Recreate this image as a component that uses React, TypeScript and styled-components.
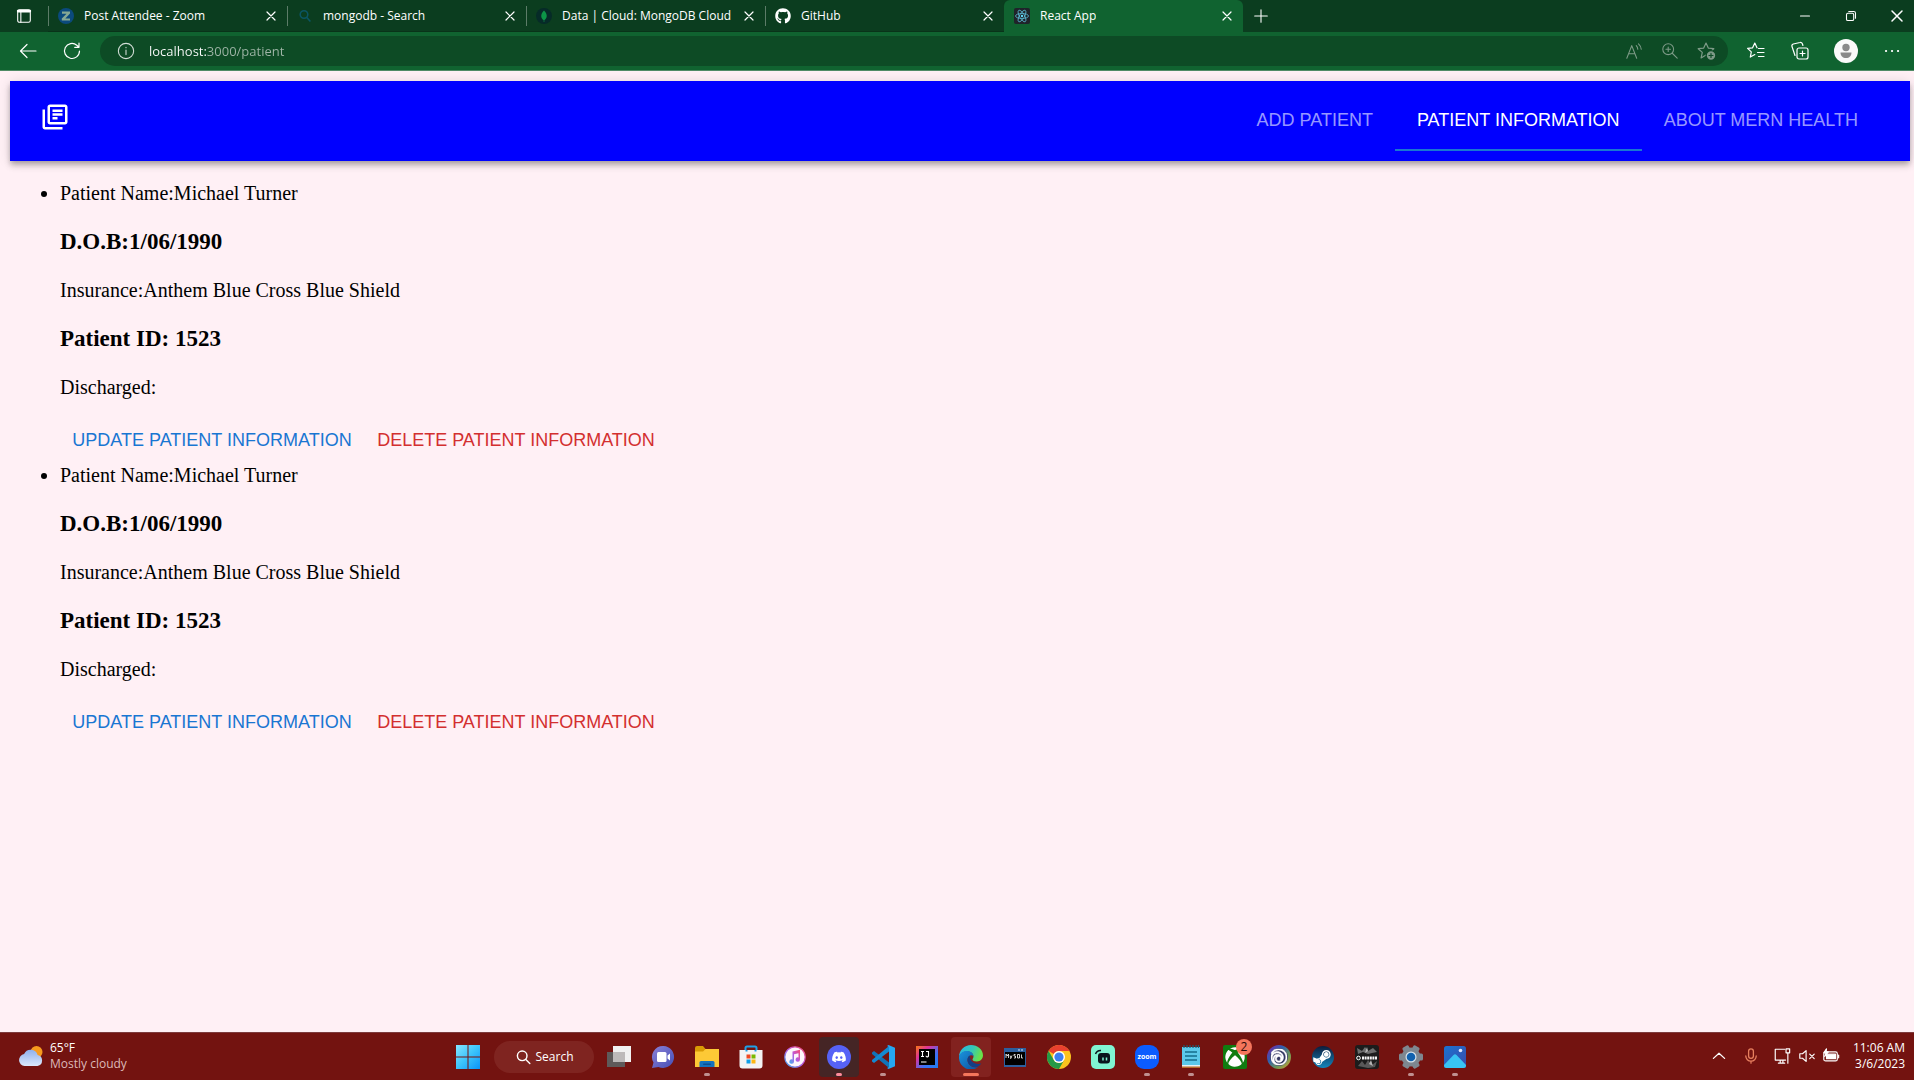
import React, { useState } from "react";
import styled, { createGlobalStyle } from "styled-components";
import { FaDiscord, FaGithub, FaSteamSymbol, FaXbox } from "react-icons/fa";
import { SiUbisoft } from "react-icons/si";

const GlobalStyle = createGlobalStyle`
  *, *::before, *::after { box-sizing: border-box; }
  body { margin: 0; background: #fff0f5; }
  button { font: inherit; color: inherit; background: none; border: 0; padding: 0; cursor: pointer; }
  svg { display: block; flex: none; }
`;

const uiFont = `"Open Sans", "Noto Sans", sans-serif`;

const Screen = styled.div`
  display: flex;
  flex-direction: column;
  min-height: 100vh;
`;

/* ---------- browser window ---------- */

const TabStrip = styled.div`
  display: flex;
  align-items: stretch;
  height: 32px;
  background: #0b3d1f;
  color: #fff;
  font: 12px/16px ${uiFont};
`;

const IconButton = styled.button<{ $w: number; $dim?: boolean }>`
  display: flex;
  align-items: center;
  justify-content: center;
  flex: none;
  width: ${(p) => p.$w}px;
  color: ${(p) => (p.$dim ? "#7d9a87" : "#fff")};
`;

const Tab = styled.div<{ $active?: boolean }>`
  display: flex;
  align-items: center;
  flex: 0 1 239px;
  min-width: 0;
  padding: 0 4px 0 10px;
  border-radius: 6px 6px 0 0;
  background: ${(p) => (p.$active ? "#106330" : "transparent")};
  box-shadow: ${(p) => (p.$active ? "none" : "inset 0 -1px #093319")};
  &::before {
    content: "";
    flex: none;
    width: 1px;
    height: 20px;
    margin: 0 9px 0 -10px;
    background: ${(p) => (p.$active ? "transparent" : "#5c7c68")};
  }
`;

const TabTitle = styled.button`
  display: flex;
  align-items: center;
  gap: 10px;
  flex: 1;
  min-width: 0;
  text-align: left;
  span {
    overflow: hidden;
    white-space: nowrap;
    text-overflow: ellipsis;
  }
`;

const WindowControls = styled.div`
  display: flex;
  margin-left: auto;
`;

const CloseWindow = styled(IconButton)`
  padding-left: 6px;
`;

const Toolbar = styled.div`
  display: flex;
  align-items: center;
  height: 39px;
  padding-left: 6px;
  background: #106330;
  border-bottom: 1px solid #4f8a65;
  color: #fff;
`;

const AddressBar = styled.label`
  display: flex;
  align-items: center;
  flex: 1;
  height: 30px;
  margin: 0 6px;
  padding: 0 4px 0 17px;
  border-radius: 15px;
  background: #0d4b25;
`;

const AddressInput = styled.input`
  flex: 1;
  min-width: 0;
  margin-left: 14px;
  padding: 0;
  border: 0;
  outline: 0;
  font: 13px/20px ${uiFont};
  color: #9fb5a7;
  background: linear-gradient(90deg, #fff 58px, #9fb5a7 58px);
  background-clip: text;
  -webkit-text-fill-color: transparent;
`;

/* ---------- patient page ---------- */

const Page = styled.div`
  flex: 1;
  padding: 10px 4px 0 10px;
  font: 20px/23px "Liberation Serif", "Times New Roman", serif;
  color: #000;
`;

const AppBar = styled.header`
  display: flex;
  align-items: center;
  justify-content: space-between;
  height: 80px;
  padding: 0 30px;
  background: #0000ff;
  color: #fff;
  box-shadow: 0 3px 5px -1px rgba(0, 0, 0, 0.2), 0 5px 6px rgba(0, 0, 0, 0.14),
    0 1px 12px rgba(0, 0, 0, 0.12);
`;

const Brand = styled.a`
  display: block;
  padding-bottom: 8px;
  color: inherit;
`;

const Nav = styled.nav`
  display: flex;
`;

const NavTab = styled.button<{ $active: boolean }>`
  height: 60px;
  padding: 0 22px;
  border-bottom: 2px solid ${(p) => (p.$active ? "#1976d2" : "transparent")};
  font: 18px/22px "Liberation Sans", Arial, sans-serif;
  text-transform: uppercase;
  color: ${(p) => (p.$active ? "#fff" : "rgba(255, 255, 255, 0.6)")};
`;

const PatientList = styled.ul`
  margin: 21px 0;
  padding-left: 50px;
`;

const Line = styled.p`
  margin: 24px 0 18px;
`;

const Heading = styled.h3`
  margin: 23px 0;
  font-size: 23px;
  line-height: 27px;
`;

const Actions = styled.div`
  display: flex;
  padding-bottom: 2px;
`;

const ActionButton = styled.button<{ $tone: string }>`
  min-width: 304px;
  height: 45px;
  font: 18px/30px "Liberation Sans", Arial, sans-serif;
  text-transform: uppercase;
  color: ${(p) => p.$tone};
`;

/* ---------- taskbar ---------- */

const Taskbar = styled.footer`
  display: grid;
  grid-template-columns: 1fr auto 1fr;
  align-items: center;
  height: 48px;
  padding: 0 9px 0 18px;
  border-top: 1px solid #7d3a3c;
  background: #731310;
  color: #fff;
  font: 12px/16px ${uiFont};
`;

const Weather = styled.button`
  display: flex;
  align-items: center;
  gap: 6px;
  justify-self: start;
  padding-bottom: 2px;
  text-align: left;
`;

const Muted = styled.div`
  color: #dcb9b8;
`;

const Apps = styled.div`
  display: flex;
  align-items: center;
`;

const AppButton = styled.button<{ $fill?: string; $mark?: string; $wide?: boolean }>`
  position: relative;
  display: flex;
  align-items: center;
  justify-content: center;
  width: 40px;
  height: 40px;
  margin: 0 2px;
  border-radius: 4px;
  background: ${(p) => p.$fill ?? "transparent"};
  &::after {
    content: "";
    position: absolute;
    bottom: 1px;
    width: ${(p) => (p.$wide ? 16 : 6)}px;
    height: 3px;
    border-radius: 2px;
    background: ${(p) => p.$mark ?? "transparent"};
  }
`;

const Badge = styled.span`
  position: absolute;
  top: 2px;
  right: 3px;
  width: 16px;
  height: 16px;
  border-radius: 8px;
  background: #f5765c;
  color: #2a0b08;
  font-size: 12px;
  line-height: 16px;
`;

const SearchPill = styled.button`
  display: flex;
  align-items: center;
  justify-content: center;
  gap: 5px;
  width: 100px;
  height: 32px;
  margin: 0 3px 0 4px;
  border-radius: 16px;
  background: #7f2420;
`;

const Tray = styled.div`
  display: flex;
  align-items: center;
  justify-self: end;
  padding-bottom: 2px;
`;

const Clock = styled.div`
  margin-left: 8px;
  text-align: right;
`;

/* ---------- icons ---------- */

type LineProps = { size?: number; children: React.ReactNode; w?: number; color?: string };
const Stroke = ({ size = 20, children, w = 1.2, color = "currentColor" }: LineProps) => (
  <svg width={size} height={size} viewBox="0 0 20 20" fill="none" stroke={color} strokeWidth={w} strokeLinecap="round" strokeLinejoin="round" aria-hidden>
    {children}
  </svg>
);

const Cross = ({ size = 16 }: { size?: number }) => (
  <Stroke size={size} w={1.5}><path d="M5 5l10 10M15 5L5 15" /></Stroke>
);

const ZoomFav = () => (
  <svg width="16" height="16" viewBox="0 0 16 16"><circle cx="8" cy="8" r="8" fill="#0b4a7d" /><path d="M4 3.500h8v2L7.300 10.400H12v2.200H3.800v-2L8.500 5.700H4z" fill="#86a894" /></svg>
);
const SearchFav = () => (
  <svg width="16" height="16" viewBox="0 0 16 16" fill="none" stroke="#0b5563" strokeWidth="1.6"><circle cx="7" cy="6.500" r="3.800" /><path d="M9.800 9.500l3.600 4" /></svg>
);
const MongoFav = () => (
  <svg width="16" height="16" viewBox="0 0 16 16"><circle cx="8" cy="8" r="8" fill="#062b28" /><path d="M8 2.500c4.200 4 3 8 .3 9.700V14h-.6v-1.800C5 10.500 3.800 6.500 8 2.500z" fill="#0c9447" /></svg>
);
const ReactFav = () => (
  <svg width="16" height="16" viewBox="0 0 16 16" fill="none" stroke="#5bb9d3" strokeWidth=".8">
    <rect width="16" height="16" rx="2" fill="#20232a" stroke="none" />
    <ellipse cx="8" cy="8" rx="6.500" ry="2.500" />
    <ellipse cx="8" cy="8" rx="6.500" ry="2.500" transform="rotate(60 8 8)" />
    <ellipse cx="8" cy="8" rx="6.500" ry="2.500" transform="rotate(120 8 8)" />
    <circle cx="8" cy="8" r="1.200" fill="#61dafb" stroke="none" />
  </svg>
);

const LibraryIcon = () => (
  <svg width="30" height="30" viewBox="0 0 24 24" fill="currentColor" aria-hidden>
    <path d="M4 6H2v14c0 1.100.9 2 2 2h14v-2H4V6zm16-4H8c-1.100 0-2 .9-2 2v12c0 1.100.9 2 2 2h12c1.100 0 2-.9 2-2V4c0-1.100-.9-2-2-2zm0 14H8V4h12v12zM10 9h8v2h-8zm0 3h4v2h-4zm0-6h8v2h-8z" />
  </svg>
);

const Svg24 = ({ children }: { children: React.ReactNode }) => (
  <svg width="24" height="24" viewBox="0 0 24 24" aria-hidden>{children}</svg>
);

const StartIcon = () => (
  <Svg24>
    <defs><linearGradient id="win" x1="0" y1="0" x2="24" y2="24" gradientUnits="userSpaceOnUse"><stop stopColor="#86e5ff" /><stop offset=".5" stopColor="#3cc4fb" /><stop offset="1" stopColor="#0a93fa" /></linearGradient></defs>
    <path fill="url(#win)" d="M0 0h11.500v11.500H0zM12.500 0H24v11.500H12.500zM0 12.500h11.500V24H0zM12.500 12.500H24V24H12.500z" />
  </Svg24>
);
const TaskViewIcon = () => (
  <Svg24><path d="M6 1h18v16H6z" fill="#f1f1f1" /><path d="M0 7h18v15H0z" fill="#5e5a5a" /><path d="M6 7h12v10H6z" fill="#bdbaba" /></Svg24>
);
const ChatIcon = () => (
  <Svg24>
    <defs><linearGradient id="chat" x1="0" y1="0" x2="1" y2="1"><stop stopColor="#8a80d8" /><stop offset="1" stopColor="#454fb5" /></linearGradient></defs>
    <path d="M12.500 1a11 11 0 1 1-5 21L1 23l1.500-5.500A11 11 0 0 1 12.500 1z" fill="url(#chat)" /><rect x="6" y="7" width="9.500" height="10" rx="1.500" fill="#fff" /><path d="M16.500 10.500L19 8.500v7l-2.500-2z" fill="#fff" />
  </Svg24>
);
const FolderIcon = () => (
  <Svg24>
    <path d="M0 3a2 2 0 0 1 2-2h6l2.500 3H24v6H0z" fill="#d99a05" />
    <path d="M0 6.500h8L10.500 4H24v18H0z" fill="#fdc936" />
    <path d="M4.500 22v-4.500A1.500 1.500 0 0 1 6 16h12a1.500 1.500 0 0 1 1.500 1.500V22z" fill="#1372be" /><rect x="8" y="18.500" width="8" height="1.500" rx=".7" fill="#0b4f91" />
  </Svg24>
);
const StoreIcon = () => (
  <Svg24>
    <path d="M6.500 7V3a1.500 1.500 0 0 1 1.500-1.500h8A1.500 1.500 0 0 1 17.500 3v4" fill="none" stroke="#1fa1e8" strokeWidth="2" />
    <path d="M.5 5h23v15.500a3 3 0 0 1-3 3h-17a3 3 0 0 1-3-3z" fill="#f3f3f3" />
    <path d="M6.500 5h2v1.500h-2zM15.500 5h2v1.500h-2z" fill="#1fa1e8" />
    <path d="M7.500 9.500h4v4h-4z" fill="#ef4a23" /><path d="M12.500 9.500h4v4h-4z" fill="#7ab800" /><path d="M7.500 14.500h4v4h-4z" fill="#109fe8" /><path d="M12.500 14.500h4v4h-4z" fill="#fdb713" />
  </Svg24>
);
const MusicIcon = () => (
  <Svg24>
    <defs><linearGradient id="tune" x1="1" y1="0" x2="0" y2="1"><stop stopColor="#fb4b6d" /><stop offset=".5" stopColor="#b65be3" /><stop offset="1" stopColor="#3fb3ef" /></linearGradient></defs>
    <circle cx="12" cy="12" r="10.200" fill="#fdf6fb" stroke="url(#tune)" strokeWidth="1.200" />
    <path d="M9.500 6.500l7.500-1.700v9.700a2.200 2.200 0 1 1-1.500-2.100V8.200L11 9.200v7.300a2.300 2.300 0 1 1-1.500-2.100z" fill="url(#tune)" />
  </Svg24>
);
const DiscordIcon = () => (
  <Svg24><circle cx="12" cy="12" r="12" fill="#5662f6" /><svg x="4.500" y="4.500" width="15" height="15"><FaDiscord size={15} color="#fff" /></svg></Svg24>
);
const CodeIcon = () => (
  <Svg24>
    <path d="M1 7.500l2-1.600L18 17.500V23L1 9z" fill="#1173b8" /><path d="M1 16.500l2 1.600L18 6.500V1L1 15z" fill="#1489d1" />
    <path d="M17.500 0L24 2.800v18.400L17.500 24l-1.500-1 2-1V2l-2-1z" fill="#25a7f2" />
  </Svg24>
);
const IdeaIcon = () => (
  <Svg24>
    <defs><linearGradient id="idea" x1="0" y1="0" x2="1" y2="1"><stop stopColor="#f97a12" /><stop offset=".3" stopColor="#e0329a" /><stop offset=".65" stopColor="#3b72f5" /><stop offset="1" stopColor="#1f7ef0" /></linearGradient></defs>
    <path d="M1 1h22v22H1z" fill="url(#idea)" /><path d="M4 4h16v16H4z" fill="#000" />
    <path d="M6 6.500h3M7.500 6.500v5M6 11.500h3M11 6.500h2.500v4a1.200 1.200 0 0 1-2.500.3M6 17h5.500" stroke="#fff" strokeWidth="1.100" fill="none" />
  </Svg24>
);
const EdgeIcon = () => (
  <Svg24>
    <defs>
      <linearGradient id="edgeA" x1="0" y1="0" x2="1" y2=".3"><stop stopColor="#29b6e8" /><stop offset=".6" stopColor="#35c8b5" /><stop offset="1" stopColor="#6ae04a" /></linearGradient>
      <linearGradient id="edgeB" x1="0" y1="0" x2="1" y2="1"><stop stopColor="#1a94dd" /><stop offset="1" stopColor="#0c4f9e" /></linearGradient>
    </defs>
    <path d="M0 12C0 5 5.500 0 12 0s12 4.700 12 10.300c0 3.700-2.700 6.200-6.200 6.200-2.600 0-4.300-1-4.300-2 0-.7 1-1.200 1-2.900C14.500 8.500 11.500 6.200 8 6.200S1 8.500 0 12z" fill="url(#edgeA)" />
    <path d="M0 12c.8-3.800 4-5.900 7.600-5.900 3.900 0 6.500 2 6.900 4.900-2.500-2-6 .3-6 4 0 4 4 7.500 8.500 7.500.7 0 1.500-.1 2.200-.4A12 12 0 0 1 0 12z" fill="url(#edgeB)" />
    <path d="M8.500 15c0-2 .9-3.700 2.300-4.500-.5 4.500 3.700 8.500 8.200 8.500 1.500 0 2.500-.4 3.300-.8-1.200 2.200-3.200 3.800-5.300 3.900-4.500.3-8.500-3-8.500-7.100z" fill="#123f87" />
  </Svg24>
);
const MysqlIcon = () => (
  <Svg24>
    <path d="M1 3h22v19H1z" fill="#2c5f9e" /><path d="M2 7h20v13H2z" fill="#000" /><path d="M15 5h2m1 0h2" stroke="#d8e8fa" />
    <path d="M3 13V9l1.200 2L5.500 9v4M7 10.500l1 2.500m1-2.500L7.500 14M12.500 9.500H11v1.500h1.500V13H11M14.500 9.500h2V13h-2zM18.500 9.500V13H20" stroke="#fff" strokeWidth=".8" fill="none" />
  </Svg24>
);
const ChromeIcon = () => (
  <Svg24>
    <circle cx="12" cy="12" r="12" fill="#fcc31e" />
    <path d="M1.600 6A12 12 0 0 1 22.400 6H12a6 6 0 0 0-5.200 3z" fill="#e8402f" />
    <path d="M1.600 6A12 12 0 0 0 12 24l5.200-9A6 6 0 0 1 6.800 15z" fill="#269947" />
    <circle cx="12" cy="12" r="6" fill="#fff" /><circle cx="12" cy="12" r="4.600" fill="#3c7ff0" />
  </Svg24>
);
const StreamIcon = () => (
  <Svg24>
    <rect width="24" height="24" rx="5" fill="#80f5d2" /><rect x="7" y="8" width="12" height="10.500" rx="3" fill="#09161d" />
    <path d="M4.500 9A5.500 5.500 0 0 1 10 5.500" stroke="#09161d" strokeWidth="1.500" fill="none" /><path d="M12 12.500v3M15.500 12.500v3" stroke="#80f5d2" strokeWidth="1.500" />
  </Svg24>
);
const ZoomLabel = styled.span`
  display: flex;
  align-items: center;
  justify-content: center;
  width: 24px;
  height: 24px;
  border-radius: 9px;
  background: #0b5cff;
  font: 700 7px/8px "Open Sans", sans-serif;
`;
const NotepadIcon = () => (
  <Svg24>
    <path d="M3 21h18v2H3z" fill="#b96d2b" /><path d="M3 2h18v18H3z" fill="#5cc9ea" /><path d="M3 20h18v1.500H3z" fill="#e8f1f3" />
    <path d="M6 7h12M6 11h12M6 15h12" stroke="#156e8c" strokeWidth="1.500" /><path d="M5 0v3M8 0v3M11 0v3M14 0v3M17 0v3M19.500 0v3" stroke="#1b5f76" strokeWidth="1.200" />
  </Svg24>
);
const XboxIcon = () => (
  <Svg24><rect width="24" height="24" rx="2" fill="#107c10" /><svg x="2" y="2" width="20" height="20"><FaXbox size={20} color="#fff" /></svg></Svg24>
);
const UbisoftIcon = () => (
  <Svg24>
    <defs><linearGradient id="ubi" x1="0" y1="0" x2="1" y2="1"><stop stopColor="#7a2aa0" /><stop offset=".35" stopColor="#2f5fb0" /><stop offset=".7" stopColor="#6f9a55" /><stop offset="1" stopColor="#c79a3c" /></linearGradient></defs>
    <circle cx="12" cy="12" r="10.500" fill="#333862" stroke="url(#ubi)" strokeWidth="3" /><svg x="3.500" y="3.500" width="17" height="17"><SiUbisoft size={17} color="#fff" stroke="#fff" strokeWidth={0.8} /></svg>
  </Svg24>
);
const SteamIcon = () => (
  <Svg24>
    <defs><linearGradient id="steam" x1="0" y1="0" x2="0" y2="1"><stop stopColor="#0d1c3b" /><stop offset="1" stopColor="#1386bd" /></linearGradient></defs>
    <circle cx="12" cy="12" r="11" fill="url(#steam)" /><svg x="1" y="2.500" width="20" height="20"><FaSteamSymbol size={20} color="#fff" /></svg>
  </Svg24>
);
const GameIcon = () => (
  <Svg24>
    <rect width="24" height="24" rx="3" fill="#1c1c1c" />
    <path d="M2 3l5 3 3-4 3 4 5-3 4 4-5 1-4 1-5-2-5 2z" fill="#6e6e6e" /><path d="M3 21l4-5 3 4 3-5 4 5 5-4-2 6-7 1-5-1z" fill="#595959" /><path d="M12 2l1 4-3 2zM16 15l2 6-4-2z" fill="#b5b5b5" />
    <circle cx="3.500" cy="13" r="1.800" fill="none" stroke="#fff" /><path d="M7 13h15" stroke="#f5f5f5" strokeWidth="3" strokeDasharray="2 .6" />
  </Svg24>
);
const SettingsIcon = () => (
  <Svg24>
    <g fill="#7e8790"><circle cx="12" cy="12" r="9.500" />{[30, 90, 150].map((a) => <rect key={a} x="8.500" y="0" width="7" height="24" rx="1.500" transform={`rotate(${a} 12 12)`} />)}</g>
    <circle cx="12" cy="12" r="5.500" fill="#d8e3ea" /><circle cx="12" cy="12" r="4.300" fill="#1262ae" />
  </Svg24>
);
const PhotosIcon = () => (
  <Svg24>
    <defs><linearGradient id="pic" x1="0" y1="0" x2="1" y2="1"><stop stopColor="#1a73d2" /><stop offset="1" stopColor="#3c4aa8" /></linearGradient></defs>
    <rect x="1" y="1" width="22" height="22" rx="2.500" fill="url(#pic)" /><path d="M1 20L10.500 10a2 2 0 0 1 3 0L23 20v.5a2.500 2.500 0 0 1-2.500 2.500h-17A2.500 2.500 0 0 1 1 20.500z" fill="#38c4f4" />
    <circle cx="17.500" cy="5.500" r="1.800" fill="#e0e8ff" />
  </Svg24>
);
const WeatherIcon = () => (
  <svg width="26" height="24" viewBox="0 0 26 24" aria-hidden>
    <defs><linearGradient id="cloud" x1="0" y1="0" x2="0" y2="1"><stop stopColor="#8eb1ee" /><stop offset="1" stopColor="#dce8fb" /></linearGradient></defs>
    <circle cx="18.500" cy="8" r="6" fill="#f79a1e" />
    <path d="M6.500 22a6 6 0 0 1-.4-11.900 7.200 7.200 0 0 1 13.500.9A5.600 5.600 0 0 1 19.500 22z" fill="url(#cloud)" />
  </svg>
);

/* ---------- data ---------- */

const tabs = [
  { title: "Post Attendee - Zoom", icon: <ZoomFav /> },
  { title: "mongodb - Search", icon: <SearchFav /> },
  { title: "Data | Cloud: MongoDB Cloud", icon: <MongoFav /> },
  { title: "GitHub", icon: <FaGithub size={16} /> },
  { title: "React App", icon: <ReactFav />, active: true },
];

const patient = { name: "Michael Turner", dob: "1/06/1990", insurance: "Anthem Blue Cross Blue Shield", id: 1523 };
const patients = [patient, patient];

const pages = ["Add Patient", "Patient Information", "About Mern Health"];

const idle = "#c09090";
const apps: { name: string; icon: React.ReactNode; fill?: string; mark?: string; wide?: boolean; badge?: number }[] = [
  { name: "Task view", icon: <TaskViewIcon /> },
  { name: "Chat", icon: <ChatIcon /> },
  { name: "File Explorer", icon: <FolderIcon />, mark: idle },
  { name: "Store", icon: <StoreIcon /> },
  { name: "iTunes", icon: <MusicIcon /> },
  { name: "Discord", icon: <DiscordIcon />, fill: "#452525", mark: "#ff8c9c" },
  { name: "Visual Studio Code", icon: <CodeIcon />, mark: idle },
  { name: "IntelliJ IDEA", icon: <IdeaIcon /> },
  { name: "Edge", icon: <EdgeIcon />, fill: "#82221f", mark: "#f5765c", wide: true },
  { name: "MySQL", icon: <MysqlIcon /> },
  { name: "Chrome", icon: <ChromeIcon /> },
  { name: "Streamlabs", icon: <StreamIcon /> },
  { name: "Zoom", icon: <ZoomLabel>zoom</ZoomLabel>, mark: idle },
  { name: "Notepad", icon: <NotepadIcon />, mark: idle },
  { name: "Xbox", icon: <XboxIcon />, badge: 2 },
  { name: "Ubisoft Connect", icon: <UbisoftIcon /> },
  { name: "Steam", icon: <SteamIcon /> },
  { name: "Game", icon: <GameIcon /> },
  { name: "Settings", icon: <SettingsIcon />, mark: idle },
  { name: "Photos", icon: <PhotosIcon />, mark: idle },
];

const starPath = "M10 2l2.300 5.100 5.500.6-4.100 3.700 1.200 5.500L10 14.100 5.100 16.900l1.200-5.500L2.200 7.700l5.500-.6z";

export default function App() {
  const [page, setPage] = useState(1);
  const [url, setUrl] = useState("localhost:3000/patient");

  return (
    <Screen>
      <GlobalStyle />
      <TabStrip>
        <IconButton $w={48} aria-label="Tab actions">
          <Stroke size={18}><rect x="3" y="3" width="14" height="14" rx="2" /><path d="M3.500 4.500h13" strokeWidth="3" /><path d="M6.500 6v11" /></Stroke>
        </IconButton>
        {tabs.map((t) => (
          <Tab key={t.title} $active={t.active}>
            <TabTitle>{t.icon}<span>{t.title}</span></TabTitle>
            <IconButton $w={24} aria-label={`Close ${t.title}`}><Cross /></IconButton>
          </Tab>
        ))}
        <IconButton $w={36} aria-label="New tab"><Stroke size={18}><path d="M10 3v14M3 10h14" /></Stroke></IconButton>
        <WindowControls>
          <IconButton $w={46} aria-label="Minimize"><Stroke size={18}><path d="M5 10h10" /></Stroke></IconButton>
          <IconButton $w={46} aria-label="Restore"><Stroke size={18}><rect x="5" y="7" width="8" height="8" rx="1.500" /><path d="M7.500 5H13a2 2 0 0 1 2 2v5.500" /></Stroke></IconButton>
          <CloseWindow $w={40} aria-label="Close window"><Cross size={20} /></CloseWindow>
        </WindowControls>
      </TabStrip>

      <Toolbar>
        <IconButton $w={44} aria-label="Back"><Stroke><path d="M18 10H2.500M9 3.500L2.500 10 9 16.500" /></Stroke></IconButton>
        <IconButton $w={44} aria-label="Refresh"><Stroke><path d="M17.500 10A7.500 7.500 0 1 1 14.800 4.200L17 6.300M17 2v4.300h-4.300" /></Stroke></IconButton>
        <AddressBar>
          <Stroke size={18} color="#d3ded7"><circle cx="10" cy="10" r="8.500" /><path d="M10 9v5M10 6v.3" /></Stroke>
          <AddressInput aria-label="Address" value={url} onChange={(e) => setUrl(e.target.value)} />
          <IconButton $w={36} $dim aria-label="Read aloud"><Stroke size={18}><path d="M2 18L7.500 4 13 18M4 13h7M12.500 4a6 6 0 0 1 1.700 4M15 2a9 9 0 0 1 3 6" /></Stroke></IconButton>
          <IconButton $w={36} $dim aria-label="Zoom"><Stroke size={18}><circle cx="8" cy="8" r="6" /><path d="M12.500 12.500L18 18M8 5.500v5M5.500 8h5" /></Stroke></IconButton>
          <IconButton $w={36} $dim aria-label="Add to favorites"><Stroke><path d={starPath} /><circle cx="15" cy="14.500" r="4.800" fill="currentColor" stroke="#0d4b25" /><path d="M15 12.500v4M13 14.500h4" stroke="#0d4b25" /></Stroke></IconButton>
        </AddressBar>
        <IconButton $w={44} aria-label="Favorites"><Stroke><path d="M11 6.800L8.800 2 6.600 6.800l-5 .6 3.700 3.500-1 5.200 4.500-2.500M12.500 7.500H18M11.500 11.500H18M12.500 15.500H18" /></Stroke></IconButton>
        <IconButton $w={44} aria-label="Collections"><Stroke><rect x="7" y="7" width="11" height="11" rx="2" /><path d="M12.500 10v5M10 12.500h5M5 14.500L2 5.500a2 2 0 0 1 1.300-2.500L10 1.500a2 2 0 0 1 2.500 1.500l.4 1.500" /></Stroke></IconButton>
        <IconButton $w={48} aria-label="Profile">
          <svg width="24" height="24" viewBox="0 0 24 24"><circle cx="12" cy="12" r="12" fill="#fafafa" /><circle cx="12" cy="8.500" r="3.700" fill="#8a8a8a" /><path d="M6.500 13.500h11c0 3.500-2.200 5.500-5.500 5.500s-5.500-2-5.500-5.500z" fill="#8a8a8a" /></svg>
        </IconButton>
        <IconButton $w={44} aria-label="More"><Stroke w={2.2}><path d="M4 10h.1M10 10h.1M16 10h.1" /></Stroke></IconButton>
      </Toolbar>

      <Page>
        <AppBar>
          <Brand href="#" aria-label="Home"><LibraryIcon /></Brand>
          <Nav>
            {pages.map((label, i) => (
              <NavTab key={label} $active={i === page} onClick={() => setPage(i)}>{label}</NavTab>
            ))}
          </Nav>
        </AppBar>
        <PatientList>
          {patients.map((p, i) => (
            <li key={i}>
              Patient Name:{p.name}
              <Heading>D.O.B:{p.dob}</Heading>
              <Line>Insurance:{p.insurance}</Line>
              <Heading>Patient ID: {p.id}</Heading>
              <Line>Discharged:</Line>
              <Actions>
                <ActionButton $tone="#1976d2">Update Patient Information</ActionButton>
                <ActionButton $tone="#d32f2f">Delete Patient Information</ActionButton>
              </Actions>
            </li>
          ))}
        </PatientList>
      </Page>

      <Taskbar>
        <Weather>
          <WeatherIcon />
          <div>65°F<Muted>Mostly cloudy</Muted></div>
        </Weather>
        <Apps>
          <AppButton aria-label="Start"><StartIcon /></AppButton>
          <SearchPill><Stroke size={16} w={1.8}><circle cx="9" cy="8.500" r="6" /><path d="M13.500 13l5 5" /></Stroke>Search</SearchPill>
          {apps.map((a) => (
            <AppButton key={a.name} aria-label={a.name} $fill={a.fill} $mark={a.mark} $wide={a.wide}>
              {a.icon}
              {a.badge && <Badge>{a.badge}</Badge>}
            </AppButton>
          ))}
        </Apps>
        <Tray>
          <IconButton $w={32} aria-label="Hidden icons"><Stroke size={16} w={1.6}><path d="M3 13l7-6.500 7 6.500" /></Stroke></IconButton>
          <IconButton $w={32} aria-label="Microphone"><Stroke size={16} w={1.6} color="#e8805f"><rect x="7" y="1" width="6" height="12" rx="3" /><path d="M3.500 10a6.500 6.500 0 0 0 13 0M10 16.500V19" /></Stroke></IconButton>
          <IconButton $w={30} aria-label="Network"><Stroke size={18} w={1.3}><path d="M13 2.500H2.500v12H14M6 18h7M8 14.500V18M11 14.500V18M14.500 2h4v4.500h-4zM16.500 6.500V18" /></Stroke></IconButton>
          <IconButton $w={20} aria-label="Volume muted"><Stroke size={18} w={1.3}><path d="M2 7.500h3L9 4v12l-4-3.500H2zM13 8l5 5M18 8l-5 5" /></Stroke></IconButton>
          <IconButton $w={28} aria-label="Battery"><Stroke size={18} w={1.3}><rect x="2" y="5.500" width="15" height="10" rx="2" /><path d="M5 8h10v5H5z" fill="currentColor" /><path d="M18.500 9v3M5 2L2 6.500h2.500L3 10.500 7 5.500H4.500z" fill="currentColor" /></Stroke></IconButton>
          <Clock>11:06 AM<br />3/6/2023</Clock>
        </Tray>
      </Taskbar>
    </Screen>
  );
}
